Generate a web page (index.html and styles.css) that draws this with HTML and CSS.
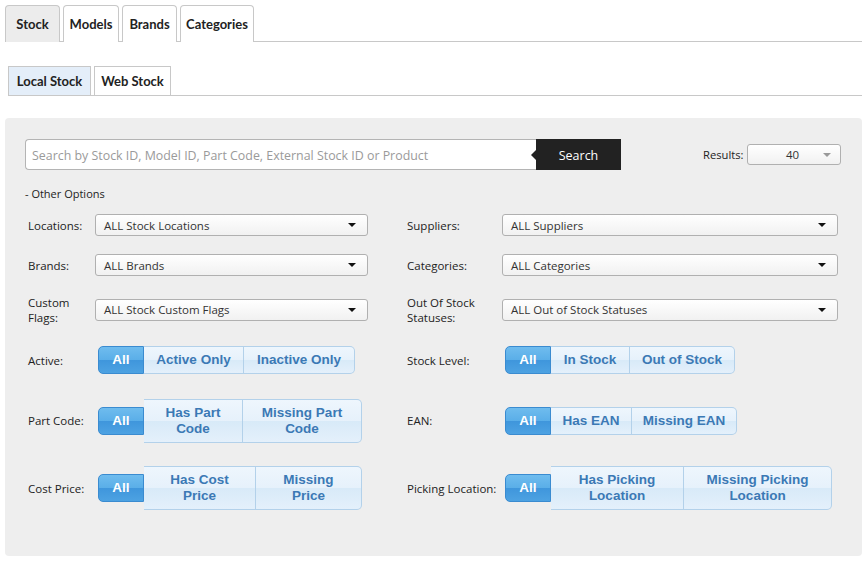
FILE: index.html
```html
<!DOCTYPE html>
<html>
<head>
<meta charset="utf-8">
<link rel="stylesheet" href="styles.css">
</head>
<body>
<div class="page">
  <nav class="tabs">
    <a class="tab active">Stock</a>
    <a class="tab">Models</a>
    <a class="tab">Brands</a>
    <a class="tab">Categories</a>
  </nav>
  <nav class="subtabs">
    <a class="subtab active">Local Stock</a>
    <a class="subtab">Web Stock</a>
  </nav>
  <section class="panel">
    <div class="search-row">
      <div class="search">
        <input class="search-input" type="text" placeholder="Search by Stock ID, Model ID, Part Code, External Stock ID or Product">
        <button class="search-btn">Search</button>
      </div>
      <div class="results">
        <span class="results-label">Results:</span>
        <div class="select small"><span class="sel-text">40</span><span class="caret gray"></span></div>
      </div>
    </div>
    <div class="other">- Other Options</div>
    <div class="grid">
      <div class="lbl">Locations:</div>
      <div class="field"><div class="select"><span class="sel-text">ALL Stock Locations</span><span class="caret"></span></div></div>
      <div class="spacer"></div>
      <div class="lbl">Suppliers:</div>
      <div class="field"><div class="select"><span class="sel-text">ALL Suppliers</span><span class="caret"></span></div></div>

      <div class="lbl">Brands:</div>
      <div class="field"><div class="select"><span class="sel-text">ALL Brands</span><span class="caret"></span></div></div>
      <div class="spacer"></div>
      <div class="lbl">Categories:</div>
      <div class="field"><div class="select"><span class="sel-text">ALL Categories</span><span class="caret"></span></div></div>

      <div class="lbl">Custom<br>Flags:</div>
      <div class="field"><div class="select"><span class="sel-text">ALL Stock Custom Flags</span><span class="caret"></span></div></div>
      <div class="spacer"></div>
      <div class="lbl">Out Of Stock<br>Statuses:</div>
      <div class="field"><div class="select"><span class="sel-text">ALL Out of Stock Statuses</span><span class="caret"></span></div></div>

      <div class="lbl">Active:</div>
      <div class="field"><div class="btn-group"><span class="btn on">All</span><span class="btn w-ao">Active Only</span><span class="btn w-io">Inactive Only</span></div></div>
      <div class="spacer"></div>
      <div class="lbl">Stock Level:</div>
      <div class="field"><div class="btn-group"><span class="btn on">All</span><span class="btn w-is">In Stock</span><span class="btn w-os">Out of Stock</span></div></div>

      <div class="lbl">Part Code:</div>
      <div class="field"><div class="btn-group"><span class="btn on">All</span><span class="btn two w-hpc">Has Part Code</span><span class="btn two w-mpc">Missing Part Code</span></div></div>
      <div class="spacer"></div>
      <div class="lbl">EAN:</div>
      <div class="field"><div class="btn-group"><span class="btn on">All</span><span class="btn w-he">Has EAN</span><span class="btn w-me">Missing EAN</span></div></div>

      <div class="lbl">Cost Price:</div>
      <div class="field"><div class="btn-group"><span class="btn on">All</span><span class="btn two w-hcp">Has Cost Price</span><span class="btn two w-mp">Missing Price</span></div></div>
      <div class="spacer"></div>
      <div class="lbl">Picking Location:</div>
      <div class="field"><div class="btn-group"><span class="btn on">All</span><span class="btn two w-hpl">Has Picking Location</span><span class="btn two w-mpl">Missing Picking Location</span></div></div>
    </div>
  </section>
</div>
</body>
</html>
```
FILE: styles.css
```css
* { box-sizing: border-box; }
html, body { margin: 0; padding: 0; background: #fff; }
body { font-family: "Open Sans", "Noto Sans", sans-serif; color: #222; }
.page { padding: 5px 5px 0 5px; width: 867px; }

.tabs { display: flex; gap: 3px; border-bottom: 1px solid #c8c8c8; height: 37px; }
.tab {
  display: flex; align-items: center; justify-content: center;
  height: 37px; padding: 0 0 1px;
  border: 1px solid #c8c8c8; border-bottom: none;
  border-radius: 4px 4px 0 0;
  background: #fff; font-family: Lato, "Open Sans", sans-serif;
  font-size: 13px; font-weight: 700; color: #222;
}
.tabs .tab:nth-child(1) { width: 55px; }
.tabs .tab:nth-child(2) { width: 56px; }
.tabs .tab:nth-child(3) { width: 55px; }
.tabs .tab:nth-child(4) { width: 74px; }
.tab.active { background: #ececec; }

.subtabs { display: flex; gap: 3px; border-bottom: 1px solid #c8c8c8; height: 30px; margin: 24px 0 0 3px; width: 854px; }
.subtab {
  display: flex; align-items: center; justify-content: center;
  height: 29px; padding: 0;
  border: 1px solid #c8c8c8; border-bottom: none;
  background: #fff; font-family: Lato, "Open Sans", sans-serif;
  font-size: 13px; font-weight: 700; color: #222;
}
.subtabs .subtab:nth-child(1) { width: 83px; }
.subtabs .subtab:nth-child(2) { width: 77px; }
.subtab.active { background: #e4eef9; }

.panel {
  margin-top: 22px; background: #eeeeee; border-radius: 4px;
  height: 438px; padding: 20px 20px 0 20px; width: 857px;
}

.search-row { display: flex; align-items: center; padding-top: 1px; }
.search { display: flex; height: 31px; }
.search-input {
  width: 511px; height: 31px; border: 1px solid #b4b4b4; border-right: none;
  border-radius: 4px 0 0 4px; background: #fff; padding: 2px 6px 0;
  font-family: "Open Sans", sans-serif; font-size: 12.4px; outline: none;
}
.search-input::placeholder { color: #9a9a9a; }
.search-btn {
  position: relative; width: 85px; height: 31px; border: none; background: #222;
  color: #fff; font-family: "Open Sans", sans-serif; font-size: 12.5px; padding: 2px 0 0;
}
.search-btn::before {
  content: ""; position: absolute; left: -5px; top: 11px;
  border-style: solid; border-width: 5px 5px 5px 0;
  border-color: transparent #222 transparent transparent;
}
.results { display: flex; align-items: center; margin-left: 82px; gap: 4px; }
.results-label { font-size: 11.2px; color: #222; }

.select {
  position: relative; display: flex; align-items: center;
  height: 22px; width: 100%;
  border: 1px solid #b0b0b0; border-radius: 3px;
  background: linear-gradient(#ffffff, #f1f1f1);
  padding: 0 8px; font-size: 11.5px; color: #333;
}
.select.small { width: 94px; height: 21px; justify-content: center; padding-right: 12px; }
.caret {
  position: absolute; right: 11px; top: 8px;
  border-style: solid; border-width: 4px 4px 0 4px;
  border-color: #111 transparent transparent transparent;
}
.caret.gray { border-color: #999 transparent transparent transparent; top: 8px; right: 9px; }

.other { font-size: 11px; margin: 14px 0 0 0; height: 19px; line-height: 19px; }

.grid {
  display: grid;
  grid-template-columns: 67px 273px 39px 95px 336px;
  grid-template-rows: 40px 40px 49px 52px 69px 66px;
  align-items: center;
  margin-left: 3px; margin-top: 2px;
}
.lbl { font-size: 11.5px; line-height: 15px; color: #222; }
.field { display: flex; align-items: center; }

.btn-group { display: flex; align-items: center; margin-left: 3px; }
.btn {
  display: flex; align-items: center; justify-content: center; text-align: center;
  height: 28px; padding: 0 8px;
  font-family: "Liberation Sans", Arial, sans-serif; font-weight: bold; font-size: 13.5px; line-height: 16px;
  color: #3b79b5;
  background: linear-gradient(#eef6fd 0%, #e6f1fb 50%, #d8eaf8 51%, #e4f0fb 100%);
  border: 1px solid #b3d1ea; border-left: none;
}
.btn:first-child { border-left: 1px solid #3a8bd0; }
.btn:last-child { border-radius: 0 5px 5px 0; }
.btn.on {
  width: 46px; padding: 0; color: #fff;
  background: linear-gradient(#6fbcee 0%, #5aaee8 50%, #3f96dc 51%, #4da2e2 100%);
  border: 1px solid #3a8bd0; border-radius: 5px 0 0 5px;
}
.btn.two { height: 44px; padding: 0 12px; }
.w-ao { width: 100px; }
.w-io { width: 111px; }
.w-is { width: 79px; }
.w-os { width: 105px; }
.w-he { width: 81px; }
.w-me { width: 105px; }
.w-hpc { width: 99px; }
.w-mpc { width: 119px; }
.w-hcp { width: 112px; }
.w-mp { width: 106px; }
.w-hpl { width: 133px; }
.w-mpl { width: 148px; }
```
